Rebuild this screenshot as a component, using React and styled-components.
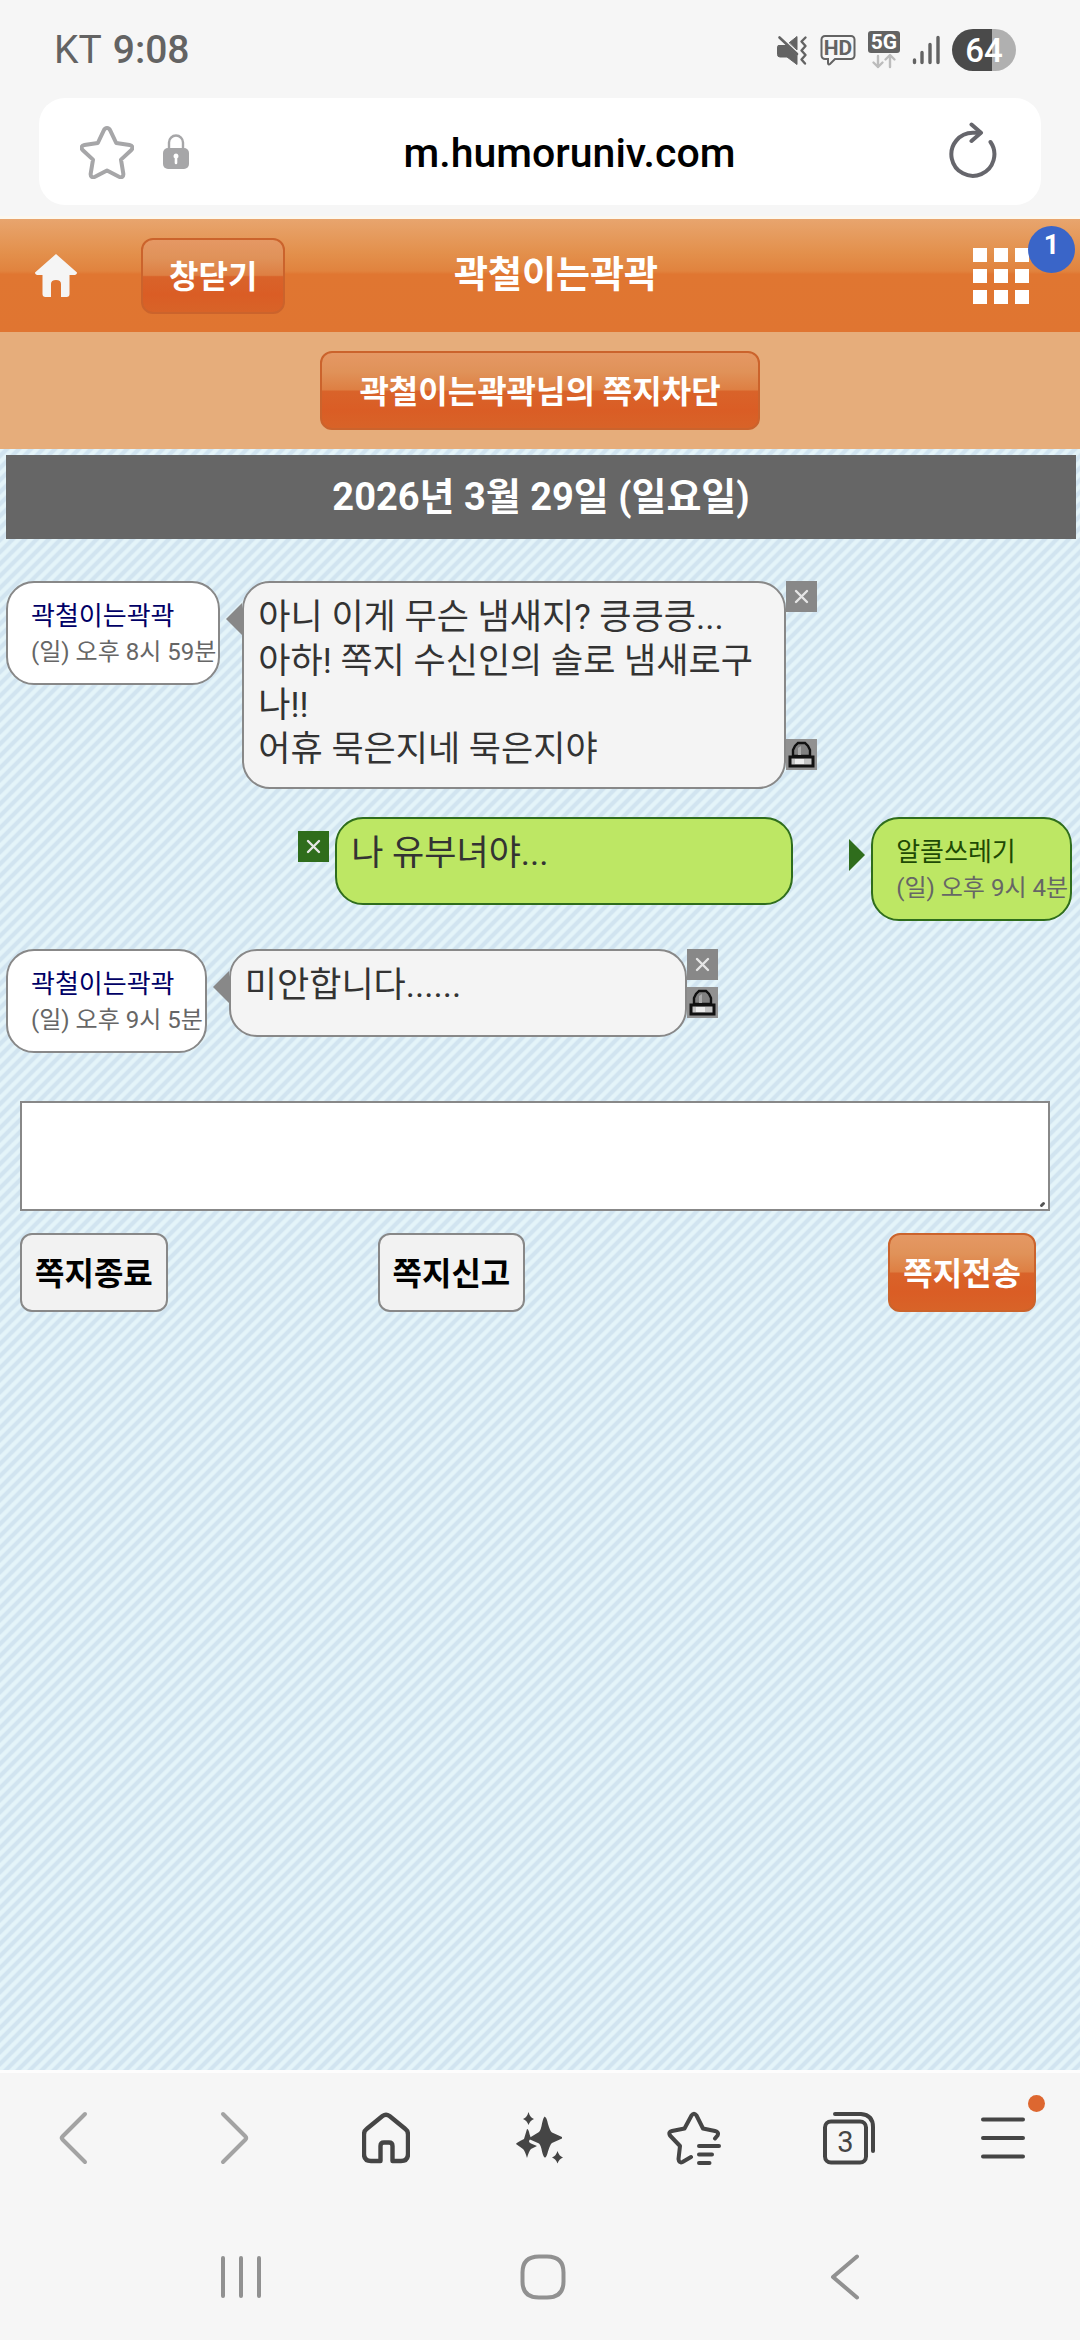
import React from 'react';
import styled, { createGlobalStyle, css } from 'styled-components';

const GlobalStyle = createGlobalStyle`
    * {
        box-sizing: border-box;
    }

    body {
        margin: 0;
        background: #f6f6f6;
        font-family: Roboto, "Noto Sans CJK KR", sans-serif;
    }

    button {
        font-family: inherit;
        cursor: pointer;
    }
`;

const Screen = styled.div`
    display: flex;
    flex-direction: column;
    min-height: 100vh;
`;

/* ---------- status bar and address bar ---------- */

const StatusBar = styled.div`
    display: flex;
    justify-content: space-between;
    align-items: center;
    height: 98px;
    padding: 2px 64px 0 54px;
    color: #636363;
    font-size: 39px;
`;

const Clock = styled.div`
    display: flex;
    gap: 11px;
`;

const Carrier = styled.span`
    font-weight: 400;
`;

const Time = styled.span`
    font-weight: 500;
`;

const StatusIcons = styled.div`
    display: flex;
    align-items: center;
    gap: 12px;

    svg {
        display: block;
    }
`;

const Battery = styled.span`
    display: flex;
    align-items: center;
    justify-content: center;
    width: 64px;
    height: 42px;
    border-radius: 21px;
    background: linear-gradient(90deg, #4a4a4a 63%, #b0b0b0 63%);
    color: #fff;
    font-size: 33px;
    font-weight: 500;
`;

const AddressBar = styled.div`
    display: grid;
    grid-template-columns: auto 1fr auto;
    align-items: center;
    height: 107px;
    margin: 0 39px 11px;
    padding: 0 38px 0 41px;
    border-radius: 26px;
    background: #fff;
`;

const AddressSide = styled.div`
    display: flex;
    align-items: center;
    gap: 28px;
`;

const IconButton = styled.button`
    display: flex;
    align-items: center;
    justify-content: center;
    padding: 0;
    border: 0;
    background: none;
    color: inherit;
`;

const Address = styled.span`
    padding-top: 2px;
    color: #000;
    font-size: 41px;
    font-weight: 500;
    text-align: center;
`;

/* ---------- page header ---------- */

const Page = styled.main`
    display: flex;
    flex-direction: column;
    flex: 1;
    border-top: 3px solid #fcf8f0;
    border-bottom: 3px solid #fdfdfd;
    background: linear-gradient(135deg, #e4f4f9 20%, #d1e4f0 30% 45%, #e4f4f9 55% 70%, #d1e4f0 80% 95%, #e4f4f9);
    background-size: 12px 12px;
`;

const glossy = css`
    border: 2px solid #cb632c;
    background: linear-gradient(#e59864, #e09259 25%, #de7f43 49%, #d9632a 51%, #da5d25 76%, #d86328);
    color: #fff;
`;

const Header = styled.header`
    display: grid;
    grid-template-columns: 1fr auto 1fr;
    align-items: center;
    height: 113px;
    padding: 0 51px 0 35px;
    background: linear-gradient(#e8a56e, #e3904c 30%, #e1833e 46%, #e07631 49%, #e07531);
    color: #fff;
`;

const HeaderLeft = styled.div`
    display: flex;
    align-items: center;
    gap: 64px;
`;

const HeaderRight = styled.div`
    position: relative;
    justify-self: end;
`;

const Title = styled.h1`
    margin: 0;
    padding-left: 48px;
    font-size: 37px;
    font-weight: 700;
    line-height: 44px;
`;

const Badge = styled.span`
    position: absolute;
    top: -22px;
    right: -46px;
    width: 47px;
    height: 47px;
    border-radius: 50%;
    background: #3a65c8;
    font-size: 27px;
    font-weight: 700;
    line-height: 38px;
    text-align: center;
`;

const Button = styled.button`
    height: ${props => props.$height || 79}px;
    padding: 0 ${props => props.$pad || 13}px 4px;
    border: 2px solid #888;
    border-radius: 12px;
    background: #f2f2f2;
    color: #000;
    font-size: 32px;
    font-weight: 700;
    white-space: nowrap;
    ${props => props.$primary && glossy}
`;

const SubBar = styled.div`
    display: flex;
    justify-content: center;
    padding: 19px 0;
    background: #e6ad7b;
`;

const DateBar = styled.h2`
    margin: 6px 4px 0 6px;
    background: #666;
    color: #fff;
    font-size: 38px;
    font-weight: 700;
    line-height: 84px;
    text-align: center;
`;

/* ---------- messages ---------- */

const Messages = styled.ul`
    display: flex;
    flex-direction: column;
    gap: 28px;
    margin: 42px 0 0;
    padding: 0 8px 0 6px;
    list-style: none;
`;

const Message = styled.li`
    display: flex;
    align-items: flex-start;
    gap: 6px;
    justify-content: ${props => (props.$mine ? 'flex-end' : 'flex-start')};
`;

const Sender = styled.div`
    flex: none;
    padding: 15px 2px 13px 23px;
    border: 2px solid ${props => (props.$mine ? '#2f6d1c' : '#888')};
    border-radius: 28px;
    background: ${props => (props.$mine ? '#bde764' : '#fff')};
    color: #666;
    font-size: 24px;
    line-height: 36px;
`;

const SenderName = styled.div`
    color: ${props => (props.$mine ? '#1e4a05' : '#000066')};
    font-size: 26px;
`;

const Speech = styled.div`
    display: flex;
    align-items: flex-start;
    min-width: 0;
`;

const Arrow = styled.span`
    flex: none;
    margin-top: 22px;
    border: 16px solid transparent;
    ${props => (props.$mine
        ? 'border-left-color: #2f6d1c; border-right: 0; margin-left: 56px;'
        : 'border-right-color: #888; border-left: 0;')}
`;

const Bubble = styled.div`
    width: fit-content;
    min-width: min(458px, 43vw);
    max-width: 544px;
    min-height: 88px;
    padding: 13px 16px 15px 14px;
    border: 2px solid ${props => (props.$mine ? '#2f6d1c' : '#888')};
    border-radius: 28px;
    background: ${props => (props.$mine ? '#bde764' : '#f4f4f4')};
    color: #333;
    font-size: 35px;
    line-height: 44px;
    white-space: pre-line;
`;

const Tools = styled.div`
    display: flex;
    flex-direction: column;
    align-self: stretch;
    justify-content: space-between;
    flex: none;
    padding: ${props => (props.$mine ? '14px 0 0' : '0 0 19px')};
`;

const DeleteButton = styled(IconButton)`
    width: 31px;
    height: 31px;
    background: ${props => (props.$mine ? '#2f6d1c' : '#888')};
    color: #e6e6e6;
`;

/* ---------- reply form ---------- */

const ReplyForm = styled.form`
    margin: 48px 30px 0 20px;
`;

const ReplyInput = styled.textarea`
    display: block;
    width: 100%;
    height: 110px;
    padding: 8px;
    border: 2px solid #888;
    border-radius: 0;
    background: #fff;
    font: 34px/44px Roboto, "Noto Sans CJK KR", sans-serif;
    resize: none;
    outline: none;
`;

const ReplyField = styled.div`
    position: relative;
`;

const Grip = styled.svg`
    position: absolute;
    right: 4px;
    bottom: 3px;
    pointer-events: none;
`;

const ReplyActions = styled.div`
    display: grid;
    grid-template-columns: 7fr 10fr auto;
    justify-items: start;
    margin: 22px 14px 0 0;
`;

/* ---------- bottom bars ---------- */

const Toolbar = styled.nav`
    display: grid;
    grid-template-columns: repeat(7, 1fr);
    justify-items: center;
    align-items: center;
    height: 130px;
    color: #454545;
`;

const SystemNav = styled.nav`
    display: grid;
    grid-template-columns: repeat(3, 1fr);
    justify-items: center;
    align-items: center;
    height: 137px;
    padding: 10px 84px 0 90px;
    color: #919191;
`;

const Notice = styled.span`
    position: absolute;
    top: -21px;
    right: -20px;
    width: 17px;
    height: 17px;
    border-radius: 50%;
    background: #dd6730;
`;

const MenuButton = styled(IconButton)`
    position: relative;
`;

const starPath = 'M27 3c1.6 0 2.6 1 3.2 2.4l6 12.6 13.4 2c3 .5 3.6 3 1.8 5L41 34.600l2.300 14c.4 3-1.8 4.400-4.300 3.200L27 45.500 15 51.800c-2.500 1.200-4.700-.2-4.300-3.200l2.300-14L2.600 25c-1.800-2-1.200-4.500 1.800-5l13.400-2 6-12.600C24.400 4 25.400 3 27 3z';

const StarIcon = () => (
    <svg width="54" height="54" viewBox="0 0 54 54" fill="none" stroke="#a6a6a8" strokeWidth="4" strokeLinejoin="round">
        <path d={starPath} />
    </svg>
);

const LockIcon = () => (
    <svg width="28" height="36" viewBox="0 0 28 36">
        <path d="M7 15V8.500a7 7 0 0 1 14 0V15" fill="none" stroke="#a6a6a8" strokeWidth="2.400" />
        <rect x="1" y="14" width="26" height="21" rx="5" fill="#a6a6a8" />
        <path d="M14 19.500a2.600 2.600 0 0 1 1.300 4.800V29a1.300 1.300 0 0 1-2.600 0v-4.700A2.600 2.600 0 0 1 14 19.500z" fill="#fff" />
    </svg>
);

const ReloadIcon = () => (
    <svg width="54" height="60" viewBox="0 0 54 60" fill="none" stroke="#66666c" strokeWidth="4" strokeLinecap="round" strokeLinejoin="round">
        <path d="M41.500 20A21.500 21.500 0 1 1 24 10.800h7" />
        <path d="M22.500 2.500l9.500 8.300-9.500 8.200" />
    </svg>
);

const MuteIcon = () => (
    <svg width="32" height="32" viewBox="0 0 32 32" fill="none" stroke="#636363" strokeLinecap="round" strokeLinejoin="round">
        <path d="M2.500 11.500H11L21 21.500V30.500L11 23H4a2.500 2.500 0 0 1-2.500-2.500v-7z" fill="#636363" strokeWidth="1" />
        <path d="M13.500 8.500L21 2.500v13z" fill="#636363" strokeWidth="1" />
        <path d="M3.500 3.500L21 20" strokeWidth="2.600" />
        <path d="M29.500 3.500l-4 4 4 4.500-4 4.500 4 4.500-4 4.500 3.500 4" strokeWidth="2.400" />
    </svg>
);

const HdIcon = () => (
    <svg width="36" height="32" viewBox="0 0 36 32">
        <path d="M5 2h26a3.500 3.500 0 0 1 3.500 3.500v16A3.500 3.500 0 0 1 31 25H15l-5 5c-1 .8-2 .5-2-1v-4H5a3.500 3.500 0 0 1-3.500-3.500v-16A3.500 3.500 0 0 1 5 2z" fill="none" stroke="#636363" strokeWidth="2" />
        <text x="18" y="21" textAnchor="middle" fontFamily="Roboto, sans-serif" fontSize="21" fontWeight="700" fill="#636363">HD</text>
    </svg>
);

const FiveGIcon = () => (
    <svg width="32" height="38" viewBox="0 0 32 38">
        <rect width="32" height="22" rx="3" fill="#636363" />
        <text x="16" y="18" textAnchor="middle" fontFamily="Roboto, sans-serif" fontSize="21" fontWeight="700" fill="#fff">5G</text>
        <g fill="none" stroke="#bcbcbc" strokeWidth="2.400" strokeLinecap="round" strokeLinejoin="round">
            <path d="M10 25v11M5.500 31.500L10 36l4.500-4.500" />
            <path d="M22 36V24.500M17.500 28.500L22 24l4.500 4.500" />
        </g>
    </svg>
);

const SignalIcon = () => (
    <svg width="28" height="32" viewBox="0 0 28 32" stroke="#636363" strokeWidth="3.400" strokeLinecap="round">
        <path d="M2.500 26v2.500M10 18.500v10M18 10.500v18M26 3.500v25" />
    </svg>
);

const HouseIcon = () => (
    <svg width="42" height="43" viewBox="0 0 42 43">
        <path d="M21 0L42 18.500c0 1.500-1 2.500-2.500 2.500H34.500V40q0 3-3 3H26V30q0-4-5-4t-5 4v13h-5.500q-3 0-3-3V21H2.500C1 21 0 20 0 18.500z" fill="#f5f5f5" />
    </svg>
);

const GridIcon = () => (
    <svg width="56" height="56" viewBox="0 0 56 56" fill="#fff">
        {[0, 21, 42].map(y => [0, 21, 42].map(x => (
            <rect key={`${x}-${y}`} x={x} y={y} width="14" height="14" />
        )))}
    </svg>
);

const CrossIcon = () => (
    <svg width="15" height="15" viewBox="0 0 15 15" stroke="currentColor" strokeWidth="2.400" strokeLinecap="round">
        <path d="M2 2l11 11M13 2L2 13" />
    </svg>
);

const SirenIcon = () => (
    <svg width="31" height="31" viewBox="0 0 31 31">
        <rect width="31" height="31" fill="#919191" />
        <path d="M7 17V11l2-4 3-3h7l3 3 2 4v6z" fill="#808080" stroke="#111" strokeWidth="2.400" />
        <path d="M12 16V9l3-2v9z" fill="#aaa" />
        <rect x="4" y="18" width="23" height="9" fill="#c4c4c4" stroke="#111" strokeWidth="3" />
        <rect x="9" y="20" width="9" height="5" fill="#ededed" />
    </svg>
);

const ChevronIcon = ({ forward }) => (
    <svg width="60" height="60" viewBox="0 0 60 60" fill="none" stroke="#a3a3a3" strokeWidth="4" strokeLinecap="round" strokeLinejoin="round">
        <path d={forward ? 'M22 6l22.500 22.500q1.500 1.500 0 3L22 54' : 'M38 6L15.500 28.500q-1.500 1.500 0 3L38 54'} />
    </svg>
);

const HomeIcon = () => (
    <svg width="48" height="52" viewBox="0 0 48 52" fill="none" stroke="currentColor" strokeWidth="4.400" strokeLinejoin="round">
        <path d="M18.500 49V34q0-3.500 3.500-3.500h5q3.500 0 3.500 3.500v15H39q7 0 7-7V22.500q0-3.500-2.600-5.500L27.500 4q-3.500-2.600-7 0L4.600 17Q2 19 2 22.500V42q0 7 7 7z" />
    </svg>
);

const SparkleIcon = () => (
    <svg width="50" height="54" viewBox="0 0 50 54" fill="currentColor">
        <path d="M13.500 1q1.500 5.500 5.500 7-4 1.500-5.500 6-1.500-4.500-5.500-6 4-1.500 5.500-7z" />
        <path d="M12 18q1.500 0 2.500 5l1.500 4.500q-4 3 0 5l6 2.500-6 3q-2 2-4 9-2-7-4-9L1 33q0-1 8-5 1.500-5 3-10z" />
        <path d="M30 6q1.500 0 3 7 2 7 4 8.500l10 4.500v1.500l-10 4.500q-2 1.500-4 8.500-1.500 6-3 6t-3-6q-1-6-3-8l-9-4q-1-1 0-2l9-5.500q2-2 3-8.500 1.500-7 3-7z" />
        <path d="M42.500 40q1.500 5 5.500 6.500-4 1.500-5.500 6-1.500-4.500-5.500-6 4-1.500 5.500-6.500z" />
    </svg>
);

const BookmarksIcon = () => (
    <svg width="54" height="54" viewBox="0 0 54 54" fill="none" stroke="currentColor" strokeWidth="4" strokeLinecap="round" strokeLinejoin="round">
        <path d="M48 27.500l2.500-3q1.800-3.500-2.500-4.500l-12-2.500-6.500-13Q27 1 24.500 4.500l-7 13L5 20q-4 1-2 4.500L13 35l-1.500 13q.5 4.500 4 3l8.500-5" />
        <path d="M32 35h20M32 43.500h13M32 52h10.500" />
    </svg>
);

const TabsIcon = () => (
    <svg width="54" height="54" viewBox="0 0 54 54" fill="none" stroke="currentColor" strokeWidth="4" strokeLinecap="round">
        <rect x="3" y="10.500" width="41" height="41" rx="6" />
        <path d="M13 3h26q12 1 12 13v24" />
        <text x="23.500" y="41" textAnchor="middle" fontFamily="Roboto, sans-serif" fontSize="29" fill="currentColor" stroke="none">3</text>
    </svg>
);

const MenuIcon = () => (
    <svg width="44" height="44" viewBox="0 0 44 44" fill="none" stroke="currentColor" strokeWidth="4" strokeLinecap="round">
        <path d="M2 3.500h40M2 22h40M2 40.500h40" />
    </svg>
);

const RecentsIcon = () => (
    <svg width="42" height="44" viewBox="0 0 42 44" stroke="currentColor" strokeWidth="4" strokeLinecap="round">
        <path d="M3 3v38M21 3v38M39 3v38" />
    </svg>
);

const SquareIcon = () => (
    <svg width="46" height="46" viewBox="0 0 46 46" fill="none" stroke="currentColor" strokeWidth="4">
        <path d="M19 2.500h8q16.500 0 16.500 16v9q0 16-16.500 16h-8q-16.500 0-16.500-16v-9q0-16 16.500-16z" />
    </svg>
);

const ReturnIcon = () => (
    <svg width="30" height="46" viewBox="0 0 30 46" fill="none" stroke="currentColor" strokeWidth="4" strokeLinecap="round" strokeLinejoin="round">
        <path d="M27 2.500L3 23l24 20.500" />
    </svg>
);

const messages = [
    {
        id: 1,
        name: '곽철이는곽곽',
        time: '(일) 오후 8시 59분',
        text: '아니 이게 무슨 냄새지? 킁킁킁...\n아하! 쪽지 수신인의 솔로 냄새로구나!!\n어휴 묵은지네 묵은지야',
    },
    { id: 2, name: '알콜쓰레기', time: '(일) 오후 9시 4분', text: '나 유부녀야...', mine: true },
    { id: 3, name: '곽철이는곽곽', time: '(일) 오후 9시 5분', text: '미안합니다......' },
];

const MessageItem = ({ message }) => {
    const { name, time, text, mine } = message;

    const sender = (
        <Sender $mine={mine}>
            <SenderName $mine={mine}>{name}</SenderName>
            <div>{time}</div>
        </Sender>
    );

    const tools = (
        <Tools $mine={mine}>
            <DeleteButton $mine={mine} type="button" aria-label="삭제"><CrossIcon /></DeleteButton>
            {!mine && <IconButton type="button" aria-label="신고"><SirenIcon /></IconButton>}
        </Tools>
    );

    if (mine) {
        return (
            <Message $mine>
                {tools}
                <Speech>
                    <Bubble $mine>{text}</Bubble>
                    <Arrow $mine />
                </Speech>
                {sender}
            </Message>
        );
    }

    return (
        <Message>
            {sender}
            <Speech>
                <Arrow />
                <Bubble>{text}</Bubble>
                {tools}
            </Speech>
        </Message>
    );
};

export default function App() {
    return (
        <Screen>
            <GlobalStyle />

            <StatusBar>
                <Clock>
                    <Carrier>KT</Carrier>
                    <Time>9:08</Time>
                </Clock>
                <StatusIcons>
                    <MuteIcon />
                    <HdIcon />
                    <FiveGIcon />
                    <SignalIcon />
                    <Battery>64</Battery>
                </StatusIcons>
            </StatusBar>

            <AddressBar>
                <AddressSide>
                    <IconButton aria-label="북마크 추가"><StarIcon /></IconButton>
                    <LockIcon />
                </AddressSide>
                <Address>m.humoruniv.com</Address>
                <IconButton aria-label="새로고침"><ReloadIcon /></IconButton>
            </AddressBar>

            <Page>
                <Header>
                    <HeaderLeft>
                        <IconButton aria-label="홈"><HouseIcon /></IconButton>
                        <Button $primary $pad={26} $height={76}>창닫기</Button>
                    </HeaderLeft>
                    <Title>곽철이는곽곽</Title>
                    <HeaderRight>
                        <IconButton aria-label="메뉴"><GridIcon /></IconButton>
                        <Badge>1</Badge>
                    </HeaderRight>
                </Header>

                <SubBar>
                    <Button $primary $pad={37}>곽철이는곽곽님의 쪽지차단</Button>
                </SubBar>

                <DateBar>2026년 3월 29일 (일요일)</DateBar>

                <Messages>
                    {messages.map(message => <MessageItem key={message.id} message={message} />)}
                </Messages>

                <ReplyForm onSubmit={e => e.preventDefault()}>
                    <ReplyField>
                        <ReplyInput aria-label="쪽지 내용" />
                        <Grip width="7" height="7" viewBox="0 0 7 7" stroke="#555" strokeWidth="3" strokeLinecap="round">
                            <path d="M2.500 4.500l2-2" />
                        </Grip>
                    </ReplyField>
                    <ReplyActions>
                        <Button type="button">쪽지종료</Button>
                        <Button type="button">쪽지신고</Button>
                        <Button $primary type="submit">쪽지전송</Button>
                    </ReplyActions>
                </ReplyForm>
            </Page>

            <Toolbar>
                <IconButton aria-label="이전"><ChevronIcon /></IconButton>
                <IconButton aria-label="다음"><ChevronIcon forward /></IconButton>
                <IconButton aria-label="홈페이지"><HomeIcon /></IconButton>
                <IconButton aria-label="AI"><SparkleIcon /></IconButton>
                <IconButton aria-label="북마크"><BookmarksIcon /></IconButton>
                <IconButton aria-label="탭"><TabsIcon /></IconButton>
                <MenuButton aria-label="도구">
                    <MenuIcon />
                    <Notice />
                </MenuButton>
            </Toolbar>

            <SystemNav>
                <IconButton aria-label="최근 앱"><RecentsIcon /></IconButton>
                <IconButton aria-label="홈 화면"><SquareIcon /></IconButton>
                <IconButton aria-label="뒤로"><ReturnIcon /></IconButton>
            </SystemNav>
        </Screen>
    );
}
